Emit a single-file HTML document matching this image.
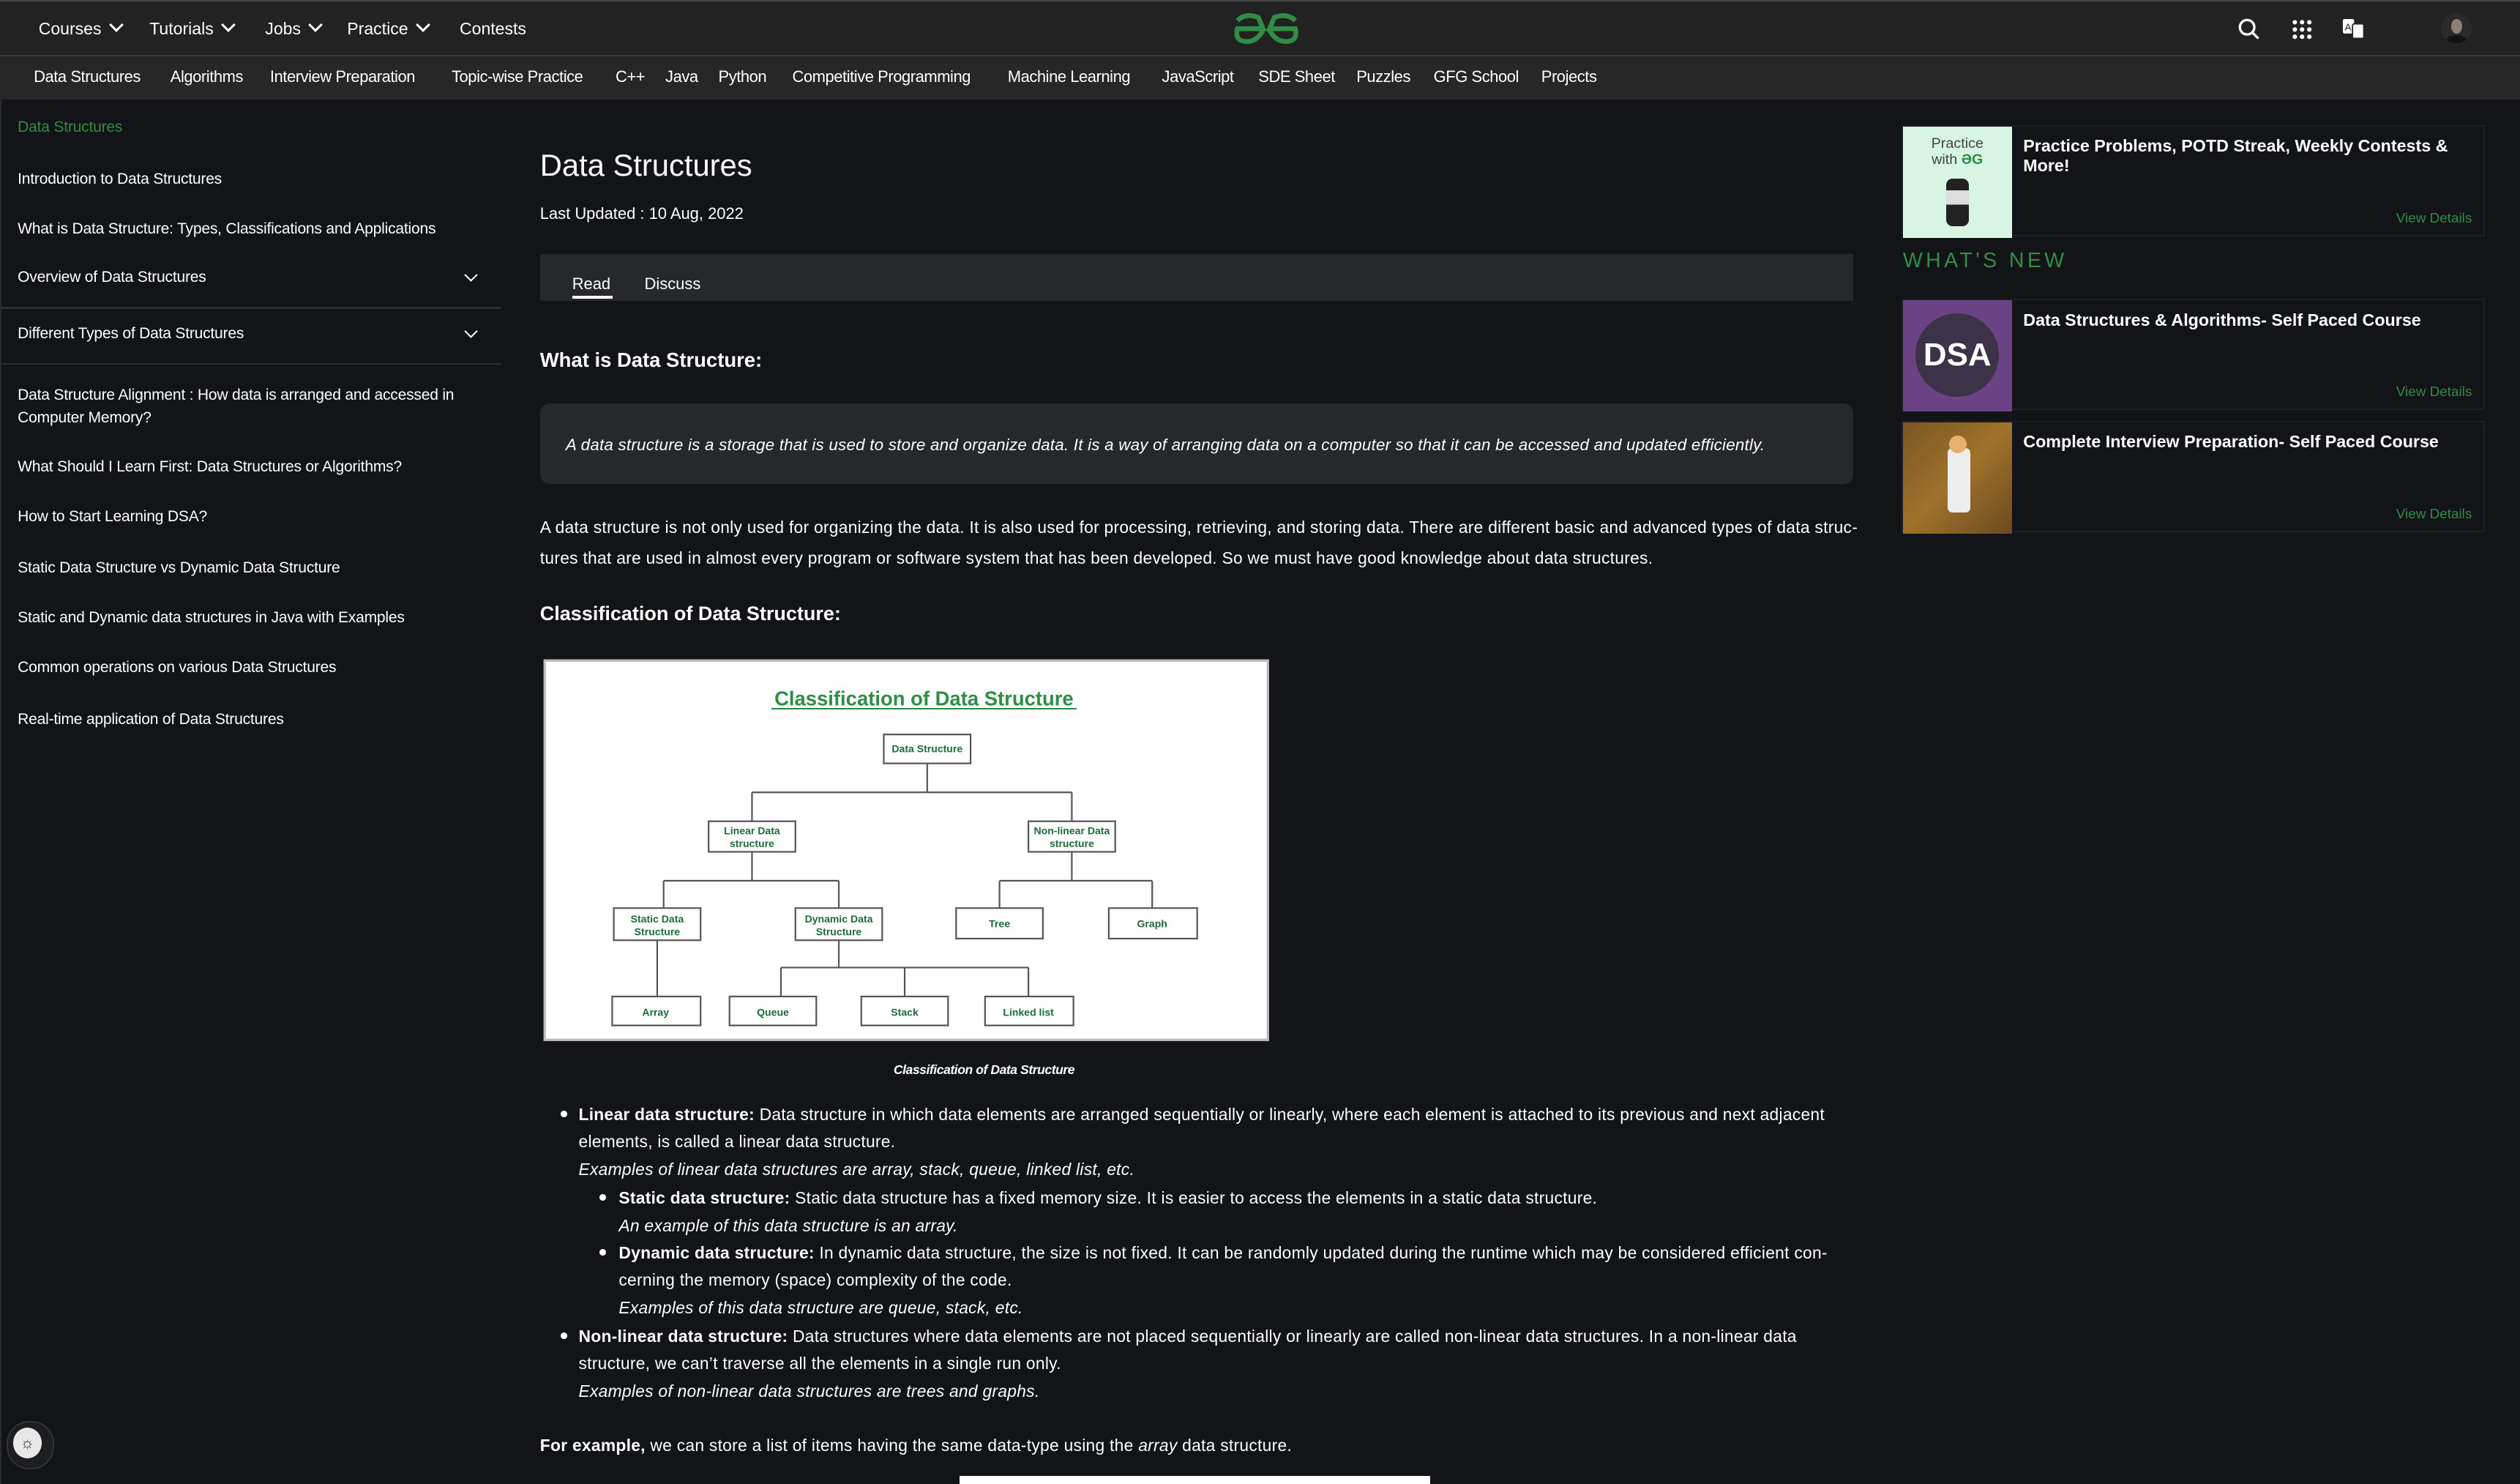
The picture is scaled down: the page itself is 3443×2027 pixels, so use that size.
<!DOCTYPE html>
<html><head><meta charset="utf-8"><style>
html,body{margin:0;padding:0;}
body{width:1568px;height:923px;zoom:2.19579;background:#131417;overflow:hidden;position:relative;font-family:"Liberation Sans",sans-serif;color:#fff;}
.a{position:absolute;white-space:nowrap;}
.top{position:absolute;left:0;top:0;width:1568px;height:35px;background:#222222;border-top:1px solid #444;box-sizing:border-box;border-bottom:1px solid #3a3a44;}
.nav2{position:absolute;left:0;top:35px;width:1568px;height:27px;background:#272727;}
.t1{font-size:10.5px;top:12px;}
.n2{font-size:10px;top:42px;letter-spacing:-0.2px;}
.chev{display:inline-block;width:5px;height:5px;border-right:1.6px solid #fff;border-bottom:1.6px solid #fff;transform:rotate(45deg);margin-left:6px;position:relative;top:-3px;}
.sv{position:absolute;width:5px;height:5px;border-right:1.3px solid #fff;border-bottom:1.3px solid #fff;transform:rotate(45deg);}
.sb{font-size:9.6px;left:11px;letter-spacing:-0.1px;}
.hr{position:absolute;left:0;width:312px;height:1px;background:#2e2f33;}
.p{font-size:10.4px;left:336px;letter-spacing:0.12px;}
.bl{position:absolute;width:4px;height:4px;border-radius:50%;background:#fff;}
.card{position:absolute;left:1183px;width:363px;height:69px;border:1px solid #1f2024;box-sizing:border-box;background:#131417;}
.ct{position:absolute;left:75px;top:6px;font-size:10.6px;font-weight:bold;line-height:12px;white-space:nowrap;}
.vd{position:absolute;right:7px;bottom:5px;font-size:8.6px;color:#2f8d46;}
</style></head><body>
<div class="top"></div><div class="nav2"></div>
<div class="a t1" style="left:24px">Courses<span class="chev"></span></div>
<div class="a t1" style="left:93px">Tutorials<span class="chev"></span></div>
<div class="a t1" style="left:165px">Jobs<span class="chev"></span></div>
<div class="a t1" style="left:216px">Practice<span class="chev"></span></div>
<div class="a t1" style="left:286px">Contests</div>
<svg class="a" style="left:767px;top:7px" width="42" height="21" viewBox="0 0 42 21"><path d="M3 6 Q8 1 16 4 L19 11 L3 11 Q1 19 9 19 Q15 19 19 12 M39 6 Q34 1 26 4 L23 11 L39 11 Q41 19 33 19 Q27 19 23 12" fill="none" stroke="#2f8d46" stroke-width="3"/></svg>
<svg class="a" style="left:1392px;top:11px" width="14" height="14" viewBox="0 0 14 14"><circle cx="6" cy="6" r="4.5" fill="none" stroke="#fff" stroke-width="1.5"/><path d="M9.3 9.3 L13 13" stroke="#fff" stroke-width="1.5"/></svg>
<svg class="a" style="left:1426px;top:12px" width="13" height="13" viewBox="0 0 13 13" fill="#fff"><circle cx="2" cy="2" r="1.4"/><circle cx="6.5" cy="2" r="1.4"/><circle cx="11" cy="2" r="1.4"/><circle cx="2" cy="6.5" r="1.4"/><circle cx="6.5" cy="6.5" r="1.4"/><circle cx="11" cy="6.5" r="1.4"/><circle cx="2" cy="11" r="1.4"/><circle cx="6.5" cy="11" r="1.4"/><circle cx="11" cy="11" r="1.4"/></svg>
<svg class="a" style="left:1458px;top:12px" width="13" height="13" viewBox="0 0 13 13"><rect x="0" y="0" width="7" height="9" rx="1" fill="#fff"/><rect x="6" y="3" width="7" height="9" rx="1" fill="#fff" stroke="#222" stroke-width="0.8"/><text x="1.2" y="7" font-size="6" font-family="Liberation Sans" fill="#222">A</text></svg>
<div class="a" style="left:1519px;top:8px;width:19px;height:19px;border-radius:50%;background:#2a2a2a;overflow:hidden"><div style="position:absolute;left:6px;top:4px;width:7px;height:9px;border-radius:50%;background:#8c8078"></div><div style="position:absolute;left:3px;top:14px;width:13px;height:8px;border-radius:50%;background:#111"></div></div>

<div class="a n2" style="left:21px">Data Structures</div>
<div class="a n2" style="left:106px">Algorithms</div>
<div class="a n2" style="left:168px">Interview Preparation</div>
<div class="a n2" style="left:281px">Topic-wise Practice</div>
<div class="a n2" style="left:383px">C++</div>
<div class="a n2" style="left:414px">Java</div>
<div class="a n2" style="left:447px">Python</div>
<div class="a n2" style="left:493px">Competitive Programming</div>
<div class="a n2" style="left:627px">Machine Learning</div>
<div class="a n2" style="left:723px">JavaScript</div>
<div class="a n2" style="left:783px">SDE Sheet</div>
<div class="a n2" style="left:844px">Puzzles</div>
<div class="a n2" style="left:892px">GFG School</div>
<div class="a n2" style="left:959px">Projects</div>

<div class="a sb" style="top:74px;color:#2f8d46">Data Structures</div>
<div class="a sb" style="top:106px">Introduction to Data Structures</div>
<div class="a sb" style="top:137px">What is Data Structure: Types, Classifications and Applications</div>
<div class="a sb" style="top:167px">Overview of Data Structures</div>
<span class="sv" style="left:290px;top:168px"></span>
<div class="hr" style="top:191px"></div>
<div class="a sb" style="top:202px">Different Types of Data Structures</div>
<span class="sv" style="left:290px;top:203px"></span>
<div class="hr" style="top:226px"></div>
<div class="a sb" style="top:239px;line-height:14px">Data Structure Alignment : How data is arranged and accessed in<br>Computer Memory?</div>
<div class="a sb" style="top:285px">What Should I Learn First: Data Structures or Algorithms?</div>
<div class="a sb" style="top:316px">How to Start Learning DSA?</div>
<div class="a sb" style="top:348px">Static Data Structure vs Dynamic Data Structure</div>
<div class="a sb" style="top:379px">Static and Dynamic data structures in Java with Examples</div>
<div class="a sb" style="top:410px">Common operations on various Data Structures</div>
<div class="a sb" style="top:442px">Real-time application of Data Structures</div>
<div class="a" style="left:0;top:62px;width:1px;height:861px;background:#2a2b2f"></div>
<div class="a" style="left:4px;top:884px;width:28px;height:28px;border-radius:14px;background:#1d1e22;border:1px solid #333;"></div>
<div class="a" style="left:8px;top:888px;width:18px;height:19px;border-radius:50%;background:#e8e8e8;color:#333;font-size:10px;text-align:center;line-height:19px">☼</div>

<div class="a" style="left:336px;top:92px;font-size:19px">Data Structures</div>
<div class="a" style="left:336px;top:127px;font-size:10px">Last Updated : 10 Aug, 2022</div>
<div class="a" style="left:336px;top:158px;width:817px;height:29px;background:#27282c"></div>
<div class="a" style="left:356px;top:171px;font-size:10px">Read</div>
<div class="a" style="left:356px;top:184px;width:25px;height:2px;background:#fff"></div>
<div class="a" style="left:401px;top:171px;font-size:10px">Discuss</div>
<div class="a" style="left:336px;top:217px;font-size:12.5px;font-weight:bold">What is Data Structure:</div>
<div class="a" style="left:336px;top:251px;width:817px;height:50px;background:#27282c;border-radius:6px"></div>
<div class="a" style="left:352px;top:271px;font-size:10.2px;font-style:italic;letter-spacing:0.1px">A data structure is a storage that is used to store and organize data. It is a way of arranging data on a computer so that it can be accessed and updated efficiently.</div>
<div class="a p" style="top:319px;line-height:19px">A data structure is not only used for organizing the data. It is also used for processing, retrieving, and storing data. There are different basic and advanced types of data struc-<br>tures that are used in almost every program or software system that has been developed. So we must have good knowledge about data structures.</div>
<div class="a" style="left:336px;top:375px;font-size:12.3px;font-weight:bold">Classification of Data Structure:</div>

<svg class="a" style="left:338px;top:410px" width="452" height="238" viewBox="338 410 452 238" font-family="Liberation Sans" font-weight="bold" fill="#1d6b3a">
<rect x="339" y="411" width="450" height="236" fill="#fff" stroke="#bbb" stroke-width="1.5"/>
<text x="575" y="439" font-size="12.5" text-anchor="middle" fill="#2f8d46">Classification of Data Structure</text>
<line x1="480" y1="441" x2="670" y2="441" stroke="#2f8d46" stroke-width="1"/>
<g fill="none" stroke="#555" stroke-width="1">
<path d="M577 475V493M468 493H667M468 493V511M667 493V511M468 530V548M413 548H522M413 548V565M522 548V565M667 530V548M622 548H717M622 548V565M717 548V565M522 585V602M486 602H640M486 602V620M563 602V620M640 602V620M409 585V620"/>
<rect x="550" y="457" width="54" height="18"/><rect x="441" y="511" width="54" height="19"/><rect x="640" y="511" width="54" height="19"/>
<rect x="382" y="565" width="54" height="20"/><rect x="495" y="565" width="54" height="20"/><rect x="595" y="565" width="54" height="19"/><rect x="690" y="565" width="55" height="19"/>
<rect x="381" y="620" width="55" height="18"/><rect x="454" y="620" width="54" height="18"/><rect x="536" y="620" width="54" height="18"/><rect x="613" y="620" width="55" height="18"/>
</g>
<g font-size="6.4" text-anchor="middle">
<text x="577" y="468">Data Structure</text>
<text x="468" y="519">Linear Data</text><text x="468" y="527">structure</text>
<text x="667" y="519">Non-linear Data</text><text x="667" y="527">structure</text>
<text x="409" y="574">Static Data</text><text x="409" y="582">Structure</text>
<text x="522" y="574">Dynamic Data</text><text x="522" y="582">Structure</text>
<text x="622" y="577">Tree</text><text x="717" y="577">Graph</text>
<text x="408" y="632">Array</text><text x="481" y="632">Queue</text><text x="563" y="632">Stack</text><text x="640" y="632">Linked list</text>
</g></svg>
<div class="a" style="left:556px;top:661px;font-size:8px;font-style:italic;font-weight:bold;letter-spacing:-0.2px">Classification of Data Structure</div>

<div class="bl" style="left:349px;top:691px"></div>
<div class="a p" style="left:360px;top:685px;line-height:17px"><b>Linear data structure:</b> Data structure in which data elements are arranged sequentially or linearly, where each element is attached to its previous and next adjacent<br>elements, is called a linear data structure.<br><i>Examples of linear data structures are array, stack, queue, linked list, etc.</i></div>
<div class="bl" style="left:373px;top:743px"></div>
<div class="a p" style="left:385px;top:737px;line-height:17px"><b>Static data structure:</b> Static data structure has a fixed memory size. It is easier to access the elements in a static data structure.<br><i>An example of this data structure is an array.</i></div>
<div class="bl" style="left:373px;top:777px"></div>
<div class="a p" style="left:385px;top:771px;line-height:17px"><b>Dynamic data structure:</b> In dynamic data structure, the size is not fixed. It can be randomly updated during the runtime which may be considered efficient con-<br>cerning the memory (space) complexity of the code.<br><i>Examples of this data structure are queue, stack, etc.</i></div>
<div class="bl" style="left:349px;top:829px"></div>
<div class="a p" style="left:360px;top:823px;line-height:17px"><b>Non-linear data structure:</b> Data structures where data elements are not placed sequentially or linearly are called non-linear data structures. In a non-linear data<br>structure, we can’t traverse all the elements in a single run only.<br><i>Examples of non-linear data structures are trees and graphs.</i></div>
<div class="a p" style="top:893px"><b>For example,</b> we can store a list of items having the same data-type using the <i>array</i> data structure.</div>
<div class="a" style="left:597px;top:918px;width:293px;height:5px;background:#fff"></div>

<div class="card" style="top:78px"><div class="a" style="left:0;top:0;width:68px;height:69px;background:#d8f5e4;color:#444;font-size:9px;text-align:center;line-height:10px;padding-top:6px;box-sizing:border-box">Practice<br>with <span style="color:#2f8d46;font-weight:bold">ƏG</span><div style="margin:6px auto 0;width:14px;height:30px;background:linear-gradient(#222 0 25%,#ddd 25% 55%,#222 55%);border-radius:4px"></div></div>
<div class="ct">Practice Problems, POTD Streak, Weekly Contests &amp;<br>More!</div><div class="vd">View Details</div></div>
<div class="a" style="left:1184px;top:155px;font-size:13px;color:#2f8d46;letter-spacing:2px">WHAT'S NEW</div>
<div class="card" style="top:186px"><div class="a" style="left:0;top:0;width:68px;height:69px;background:#6b4283"><div style="position:absolute;left:8px;top:8px;width:52px;height:52px;border-radius:50%;background:#3c3349;color:#fff;font-size:20px;font-weight:bold;text-align:center;line-height:52px">DSA</div></div>
<div class="ct">Data Structures &amp; Algorithms- Self Paced Course</div><div class="vd">View Details</div></div>
<div class="card" style="top:262px"><div class="a" style="left:0;top:0;width:68px;height:69px;background:linear-gradient(135deg,#7a5624,#a0722a 50%,#6a4a20)"><div style="position:absolute;left:28px;top:16px;width:14px;height:40px;background:#eee;border-radius:3px"></div><div style="position:absolute;left:29px;top:8px;width:11px;height:11px;border-radius:50%;background:#e8b070"></div></div>
<div class="ct">Complete Interview Preparation- Self Paced Course</div><div class="vd">View Details</div></div>
</body></html>
